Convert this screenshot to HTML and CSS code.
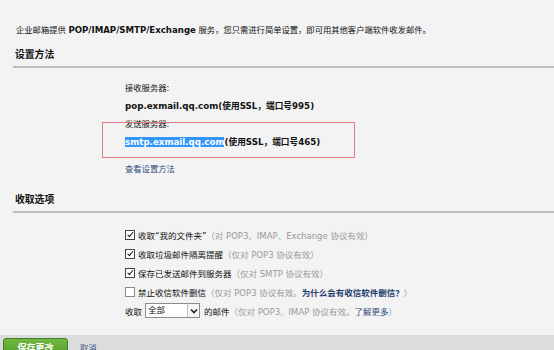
FILE: index.html
```html
<!DOCTYPE html>
<html lang="zh-CN">
<head>
    <meta charset="UTF-8">
    <title>POP/SMTP 设置</title>
    <link rel="stylesheet" href="styles.css">
</head>
<body>
    <div class="page">
        <p class="intro">企业邮箱提供 <b>POP/IMAP/SMTP/Exchange</b> 服务，您只需进行简单设置，即可用其他客户端软件收发邮件。</p>

        <h2 class="sec-title">设置方法</h2>
        <div class="sec-body servers">
            <div class="row">接收服务器:</div>
            <div class="row strong">pop.exmail.qq.com(使用SSL，端口号995)</div>
            <div class="marked">
                <div class="row">发送服务器:</div>
                <div class="row strong"><span class="sel">smtp.exmail.qq.com</span>(使用SSL，端口号465)</div>
                <i class="mark-box"></i>
            </div>
            <a class="row link guide" href="#">查看设置方法</a>
        </div>

        <h2 class="sec-title second">收取选项</h2>
        <div class="sec-body options">
            <label class="opt"><span class="cb on"></span>收取“我的文件夹”<span class="hint">（对 POP3、IMAP、Exchange 协议有效）</span></label>
            <label class="opt"><span class="cb on"></span>收取垃圾邮件隔离提醒<span class="hint">（仅对 POP3 协议有效）</span></label>
            <label class="opt"><span class="cb on"></span>保存已发送邮件到服务器<span class="hint">（仅对 SMTP 协议有效）</span></label>
            <label class="opt"><span class="cb"></span>禁止收信软件删信<span class="hint">（仅对 POP3 协议有效。<a class="link bold" href="#">为什么会有收信软件删信？</a>）</span></label>
            <div class="opt">收取
                <span class="select"><span class="select-val">全部</span><span class="select-btn"><svg width="8" height="6" viewBox="0 0 8 6"><path d="M1 1.5 L4 4.5 L7 1.5" fill="none" stroke="#222" stroke-width="1.6"/></svg></span></span>
                的邮件<span class="hint">（仅对 POP3、IMAP 协议有效。<a class="link" href="#">了解更多</a>）</span>
            </div>
        </div>
    </div>
    <div class="footer">
        <button class="btn-save">保存更改</button>
        <a class="btn-cancel" href="#">取消</a>
    </div>
</body>
</html>
```

FILE: styles.css
```css
html, body {
    margin: 0;
    height: 100%;
    overflow: hidden;
}
body {
    background: #f3f3f3;
    color: #111;
    font-family: "DejaVu Sans", "Noto Sans CJK SC", sans-serif;
    font-size: 8.3px;
}
.page {
    height: 335px;
}
.intro {
    margin: 0;
    padding: 23px 0 0 16px;
    line-height: 14px;
}
.intro b {
    font-size: 8.6px;
}
.sec-title {
    margin: 11px 0 0 13px;
    padding: 0 0 4px 2px;
    font-size: 9.8px;
    line-height: 14px;
    border-bottom: 2px solid #bcbcbc;
}
.sec-title.second {
    margin-top: 15px;
}
.sec-body {
    padding-left: 125px;
}
.servers {
    padding-top: 11px;
}
.row {
    display: block;
    line-height: 18px;
    white-space: nowrap;
}
.strong {
    font-weight: bold;
    font-size: 8.7px;
}
.sel {
    background: #3297fd;
    color: #fff;
}
.marked {
    position: relative;
}
.mark-box {
    position: absolute;
    top: 7px;
    left: -23px;
    width: 251px;
    height: 34px;
    border: 1px solid #e27a82;
}
.link {
    color: #2f4d78;
    text-decoration: none;
}
.link.bold {
    font-weight: bold;
    color: #1f3d6e;
}
.guide {
    margin-top: 9px;
}
.options {
    padding-top: 12px;
}
.opt {
    display: flex;
    align-items: center;
    height: 19px;
    white-space: nowrap;
    font-size: 8.5px;
}
.cb {
    width: 8px;
    height: 8px;
    border: 1px solid #8a8a8a;
    background: #fff;
    margin-right: 3px;
    position: relative;
}
.cb.on {
    border-color: #444;
}
.cb.on::after {
    content: "";
    position: absolute;
    left: 2.5px;
    top: 0;
    width: 2px;
    height: 4.5px;
    border: solid #111;
    border-width: 0 1.5px 1.5px 0;
    transform: rotate(40deg);
}
.hint {
    color: #9a9a9a;
}
.select {
    display: inline-flex;
    width: 53px;
    height: 13px;
    margin: 0 4px 0 3px;
    border: 1px solid #8c8c8c;
    background: #fff;
}
.select-val {
    flex: 1;
    line-height: 13px;
    padding-left: 2px;
}
.select-btn {
    width: 11px;
    border-left: 1px solid #bdbdbd;
    display: flex;
    align-items: center;
    justify-content: center;
    background: #f6f6f6;
}
.footer {
    height: 15px;
    background: #dcdcdc;
    padding: 3px 0 0 3px;
    display: flex;
    gap: 12px;
}
.btn-save {
    width: 65px;
    height: 20px;
    border: 1px solid #3f7f1f;
    border-radius: 3px 3px 0 0;
    background: linear-gradient(#72b843, #4f9a27);
    color: #fff;
    font-family: "Noto Sans CJK SC", sans-serif;
    font-weight: bold;
    font-size: 9px;
    line-height: 18px;
    padding: 0;
}
.btn-cancel {
    color: #3a567e;
    text-decoration: none;
    line-height: 20px;
}
```
